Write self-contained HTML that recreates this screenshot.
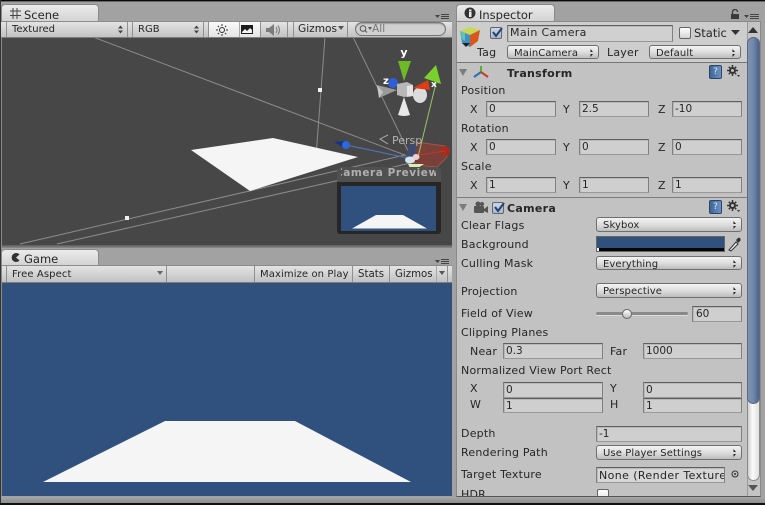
<!DOCTYPE html>
<html><head><meta charset="utf-8">
<style>
html,body{margin:0;padding:0;width:765px;height:505px;overflow:hidden;background:#a2a2a2}
*{box-sizing:border-box}
body{position:relative;font-family:"DejaVu Sans","Liberation Sans",sans-serif;color:#1a1a1a}
div,span.a{position:absolute}
.l{position:absolute;font-size:11px;line-height:14px;margin-top:1px;letter-spacing:.22px;white-space:nowrap;color:#262626}
.tb{position:absolute;font-size:10.6px;line-height:14px;margin-top:1px;white-space:nowrap;color:#262626}
.f{position:absolute;background:#cfcfcf;border:1px solid #808080;border-top-color:#606060;border-bottom-color:#989898;box-shadow:inset 1px 1px 0 #b8b8b8;font-size:10.5px;line-height:14px;padding-left:2px;white-space:nowrap;overflow:hidden;color:#262626}
.p{position:absolute;background:linear-gradient(#f3f3f3,#dedede 50%,#bdbdbd);border:1px solid #6f6f6f;border-radius:3px;font-size:10px;letter-spacing:.1px;line-height:13px;padding:1px 0 0 6px;white-space:nowrap;color:#262626}
.p:after{content:"";position:absolute;right:5px;top:3px;width:5px;height:8px;background:linear-gradient(#222 0 3px,transparent 3px 5px,#222 5px);clip-path:polygon(50% 0,100% 38%,0 38%,0 62%,100% 62%,50% 100%)}
.tab{position:absolute;background:linear-gradient(#ebebeb,#d2d2d2);border:1px solid #8a8a8a;border-bottom:0;border-radius:4px 4px 0 0}
.sep{position:absolute;width:1px;background:#8f8f8f}
.bar{position:absolute;background:linear-gradient(#e3e3e3,#c2c2c2);border-top:1px solid #8c8c8c;border-bottom:1px solid #7e7e7e}
.cb{position:absolute;width:12px;height:12px;background:linear-gradient(#fff,#d4d4d4);border:1px solid #666;border-radius:2px}
.h{position:absolute;width:13px;height:14px;background:linear-gradient(90deg,#3f6598,#6d93c6);border:1px solid #2c4468;border-radius:2px;color:#dbe6f5;font-size:9px;line-height:12px;text-align:center}
</style></head><body>
<div style="left:0;top:0;width:765px;height:1px;background:#0a0a0a"></div>
<div style="left:0;top:1px;width:765px;height:1px;background:#666"></div>
<div style="left:0;top:0;width:1px;height:505px;background:#333"></div>
<div style="left:0;top:503px;width:765px;height:2px;background:#111"></div>
<div style="left:1px;top:497px;width:764px;height:6px;background:linear-gradient(#a6a6a6,#8e8e8e)"></div>

<!-- Scene -->
<div class="tab" style="left:1px;top:4px;width:98px;height:18px"></div>
<svg style="position:absolute;left:9px;top:7px" width="14" height="13"><path d="M4 1V12M8 1V12M1 4H12M1 8.500H12" stroke="#444" fill="none"/></svg>
<div class="l" style="left:24px;top:7px;font-size:11.5px;letter-spacing:0">Scene</div>
<svg style="position:absolute;left:434px;top:13px" width="18" height="8"><path d="M1 2H6L3.500 5Z" fill="#444"/><path d="M7 1.500H15M7 3.500H15M7 5.500H15" stroke="#444"/></svg>
<div class="bar" style="left:1px;top:21px;width:451px;height:17px"></div>
<div class="sep" style="left:6px;top:22px;height:15px"></div>
<div class="tb" style="left:12px;top:22px;font-size:10px">Textured</div>
<svg style="position:absolute;left:118px;top:25px" width="6" height="9"><path d="M0 3.500L2.500 0.500L5 3.500ZM0 5.500L2.500 8.500L5 5.500Z" fill="#444"/></svg>
<div class="sep" style="left:127px;top:22px;height:15px"></div>
<div class="sep" style="left:132px;top:22px;height:15px"></div>
<div class="tb" style="left:138px;top:22px;font-size:10px">RGB</div>
<svg style="position:absolute;left:194px;top:25px" width="6" height="9"><path d="M0 3.500L2.500 0.500L5 3.500ZM0 5.500L2.500 8.500L5 5.500Z" fill="#444"/></svg>
<div class="sep" style="left:203px;top:22px;height:15px"></div>
<div class="sep" style="left:208px;top:22px;height:15px"></div>
<div style="left:209px;top:22px;width:51px;height:15px;background:linear-gradient(#fafafa,#e4e4e4)"></div>
<svg style="position:absolute;left:215px;top:23px" width="14" height="14"><circle cx="7" cy="7" r="2.500" fill="none" stroke="#333"/><path d="M7 1V3M7 11V13M1 7H3M11 7H13M2.800 2.800L4 4M10 10L11.200 11.200M2.800 11.200L4 10M10 4L11.200 2.800" stroke="#333"/></svg>
<div class="sep" style="left:239px;top:22px;height:15px;background:#a8a8a8"></div>
<div style="left:241px;top:25px;width:12px;height:9px;background:#1c1c1c"></div>
<svg style="position:absolute;left:241px;top:25px" width="12" height="9"><path d="M1 7L4 4L6 6L9 3L11 5V8H1Z" fill="#f2f2f2"/></svg>
<div class="sep" style="left:260px;top:22px;height:15px"></div>
<svg style="position:absolute;left:265px;top:23px" width="16" height="14"><path d="M1 5H4L9 1V13L4 9H1Z" fill="#7c7c7c"/><path d="M11 4Q13 7 11 10M13 2.500Q16 7 13 11.500" stroke="#777" fill="none"/></svg>
<div class="sep" style="left:287px;top:22px;height:15px"></div>
<div class="sep" style="left:293px;top:22px;height:15px"></div>
<div class="tb" style="left:298px;top:21px">Gizmos</div>
<svg style="position:absolute;left:338px;top:26px" width="7" height="5"><path d="M0 0H6L3 4Z" fill="#555"/></svg>
<div class="sep" style="left:347px;top:22px;height:15px"></div>
<div style="left:355px;top:22px;width:91px;height:14px;border:1px solid #767676;border-radius:7px;background:#d0d0d0;box-shadow:inset 0 1px 1px #999"></div>
<svg style="position:absolute;left:359px;top:24px" width="14" height="10"><circle cx="4" cy="4.500" r="2.800" fill="none" stroke="#555"/><path d="M6 6.500L8 8.500" stroke="#555"/><path d="M9 3H13L11 6Z" fill="#555"/></svg>
<div class="tb" style="left:372px;top:21px;color:#777">All</div>

<div style="left:1px;top:38px;width:451px;height:207px;background:#474747;overflow:hidden"></div>
<svg style="position:absolute;left:1px;top:38px" width="451" height="207" viewBox="1 38 451 207">
<g stroke="#8c8c8c" fill="none" stroke-width="1">
<path d="M93 37L410 157"/>
<path d="M325 37L315 170"/>
<path d="M353 37L410 155"/>
<path d="M20 244L405 155"/>
<path d="M57 244L340 180L410 163"/>
<path d="M340 180H420"/>
</g>
<rect x="318" y="88" width="4" height="4" fill="#f0f0f0"/>
<rect x="125" y="216" width="4" height="4" fill="#f0f0f0"/>
<path d="M191 150L273 138L358 157L250 191Z" fill="#f5f5f5"/>
<!-- camera gizmo -->
<path d="M416 142L445 146L447 157L437 167L414 165Z" fill="#7a3f38"/>
<path d="M416 142L445 146L447 157L437 167L414 165Z" fill="none" stroke="#a3544a"/>
<circle cx="445" cy="151" r="5" fill="#a92a1e"/>
<path d="M408 157L445 151" stroke="#bb3a30"/>
<path d="M410 143L418 143L414 158L406 156Z" fill="#3a4a72" opacity=".9"/>
<path d="M346 145L408 158" stroke="#4c70b4" stroke-width="1.200"/>
<path d="M334 142L346 141L346 149Z" fill="#13328c"/>
<circle cx="346" cy="145" r="4" fill="#2f68dd"/>
<path d="M436 83L418 157" stroke="#97c565"/>
<ellipse cx="410" cy="160" rx="5" ry="3.500" fill="#d6e4f0"/>
<ellipse cx="416" cy="157" rx="3.500" ry="3" fill="#e9d0d0"/>
<path d="M408 164L424 164L418 168H410Z" fill="#dcecb0"/>
<!-- axis gizmo -->
<ellipse cx="420" cy="95" rx="7" ry="8" fill="#dcdcdc"/>
<path d="M398 61H411L404 81Z" fill="#6dbb24"/>
<path d="M436 65L424 78L441 84Z" fill="#7ad12c"/>
<path d="M413 88L428 80L430 90Z" fill="#e13c14"/>
<circle cx="393" cy="83" r="5" fill="#2c5fd8"/>
<path d="M377 85L379 98L397 90Z" fill="#9a9a9a"/>
<path d="M377 85L379 98L383 92Z" fill="#c6c6c6"/>
<path d="M397 84L407 82L413 85V96L404 97L397 95Z" fill="#b8b8b8"/>
<path d="M407 86L413 85V96L407 97Z" fill="#e4e4e4"/>
<path d="M404 97L398 115Q404 117 410 115Z" fill="#e8e8e8"/>
<path d="M388 135L380 139L388 144" stroke="#aaa" fill="none"/>
<text x="404" y="56" font-family="DejaVu Sans" font-weight="bold" font-size="11" fill="#fff" text-anchor="middle">y</text>
<text x="383" y="84" font-family="DejaVu Sans" font-weight="bold" font-size="10" fill="#fff">z</text>
<text x="431" y="87" font-family="DejaVu Sans" font-weight="bold" font-size="9" fill="#fff">x</text>
<text x="392" y="144" font-family="DejaVu Sans" font-size="11" fill="#b4b4b4">Persp</text>
</svg>
<!-- preview -->
<div style="left:337px;top:167px;width:104px;height:67px;background:#262626;border-radius:3px;overflow:hidden">
  <div style="left:0;top:0;width:104px;height:15px;background:#505050"></div>
  <div style="left:4px;top:0;width:95px;overflow:hidden;height:15px;"><div style="left:-6px;top:0;font-size:10.500px;line-height:13px;font-weight:bold;color:#b0b0b0;white-space:nowrap;letter-spacing:.55px">Camera Preview</div></div>
  <div style="left:4px;top:19px;width:95px;height:45px;background:#30507d"></div>
</div>
<svg style="position:absolute;left:341px;top:186px" width="95" height="45"><path d="M11 42.500L35 29H62L86 42.500Z" fill="#f5f5f5"/></svg>
<div style="left:1px;top:245px;width:451px;height:3px;background:linear-gradient(#5a5a5a,#8c8c8c)"></div>

<!-- Game -->
<div class="tab" style="left:1px;top:249px;width:98px;height:17px"></div>
<svg style="position:absolute;left:10px;top:252px" width="11" height="11"><path d="M9.500 2.500A4.500 4.500 0 1 0 9.500 8.500L6 5.500Z" fill="#333"/></svg>
<div class="l" style="left:24px;top:251px;font-size:11.5px;letter-spacing:0">Game</div>
<svg style="position:absolute;left:434px;top:258px" width="18" height="8"><path d="M1 2H6L3.500 5Z" fill="#444"/><path d="M7 1.500H15M7 3.500H15M7 5.500H15" stroke="#444"/></svg>
<div class="bar" style="left:1px;top:265px;width:451px;height:18px"></div>
<div class="sep" style="left:6px;top:266px;height:16px"></div>
<div class="tb" style="left:12px;top:267px;font-size:10px;letter-spacing:.1px">Free Aspect</div>
<svg style="position:absolute;left:157px;top:271px" width="7" height="5"><path d="M0 0H6L3 4Z" fill="#666"/></svg>
<div class="sep" style="left:166px;top:266px;height:16px"></div>
<div class="sep" style="left:254px;top:266px;height:16px"></div>
<div class="tb" style="left:260px;top:267px;font-size:10px;letter-spacing:.1px">Maximize on Play</div>
<div class="sep" style="left:352px;top:266px;height:16px"></div>
<div class="tb" style="left:358px;top:267px;font-size:10.2px">Stats</div>
<div class="sep" style="left:389px;top:266px;height:16px"></div>
<div class="tb" style="left:395px;top:267px;font-size:10.2px">Gizmos</div>
<div class="sep" style="left:436px;top:266px;height:16px;background:#a8a8a8"></div>
<svg style="position:absolute;left:439px;top:271px" width="7" height="5"><path d="M0 0H6L3 4Z" fill="#555"/></svg>
<div class="sep" style="left:447px;top:266px;height:16px"></div>
<div style="left:1px;top:283px;width:451px;height:213px;background:#30507d"></div>
<svg style="position:absolute;left:1px;top:283px" width="451" height="213" viewBox="1 283 451 213"><path d="M43 482L165 421H295L411 482Z" fill="#f5f5f5"/></svg>
<div style="left:1px;top:37px;width:1px;height:459px;background:#8a8a8a"></div>

<!-- Inspector -->
<div class="tab" style="left:456px;top:4px;width:99px;height:18px"></div>
<svg style="position:absolute;left:464px;top:7px" width="13" height="13"><circle cx="6" cy="6" r="5.500" fill="#333"/><rect x="5" y="5" width="2.500" height="5" fill="#eee"/><rect x="5" y="2.500" width="2.500" height="2" fill="#eee"/></svg>
<div class="l" style="left:479px;top:7px;font-size:11.5px;letter-spacing:0">Inspector</div>
<svg style="position:absolute;left:730px;top:9px" width="11" height="10"><path d="M2.500 5V3A2.500 2.500 0 0 1 7.500 3" stroke="#3a3a3a" stroke-width="1.300" fill="none"/><rect x="1" y="5" width="8" height="5" fill="#3a3a3a"/></svg>
<svg style="position:absolute;left:744px;top:13px" width="18" height="8"><path d="M0 2H5L2.500 5Z" fill="#444"/><path d="M6 1.500H15M6 3.500H15M6 5.500H15" stroke="#444"/></svg>
<div style="left:456px;top:21px;width:305px;height:476px;background:#c2c2c2;border:1px solid #8a8a8a;border-bottom-color:#555"></div>
<div style="left:457px;top:22px;width:290px;height:40px;background:#cdcdcd"></div>
<div style="left:457px;top:62px;width:290px;height:1px;background:#747474"></div>

<!-- top header -->
<svg style="position:absolute;left:458px;top:26px" width="24" height="22"><path d="M2 5L12 1L22 4L12 9Z" fill="#c8d850"/><path d="M2 5L12 9V21L4 17Z" fill="#3f90c4"/><path d="M12 9L22 4L20 15L12 21Z" fill="#d9571c"/><path d="M2 5L7 7V15L4 13Z" fill="#62c3b0"/><path d="M4 17H12L8 21Z" fill="#222"/></svg>
<div class="cb" style="left:490px;top:27px;background:linear-gradient(#c9d6e8,#a6b8d2)"></div>
<svg style="position:absolute;left:491px;top:26px" width="13" height="13"><path d="M2 6L5 10L11 2" stroke="#27406e" stroke-width="2" fill="none"/></svg>
<div class="f" style="left:507px;top:25px;width:166px;height:17px;font-size:11px;background:#d0d0d0;letter-spacing:.35px">Main Camera</div>
<div class="cb" style="left:679px;top:27px"></div>
<div class="l" style="left:694px;top:25px;font-size:11.5px;letter-spacing:0">Static</div>
<svg style="position:absolute;left:731px;top:30px" width="10" height="6"><path d="M0 0H9L4.500 5Z" fill="#333"/></svg>
<div class="l" style="left:477px;top:45px">Tag</div>
<div class="p" style="left:507px;top:45px;width:92px;height:14px">MainCamera</div>
<div class="l" style="left:607px;top:45px">Layer</div>
<div class="p" style="left:649px;top:45px;width:92px;height:14px">Default</div>

<!-- Transform -->
<svg style="position:absolute;left:459px;top:68px" width="9" height="9"><path d="M0 1H8L4 8Z" fill="#7c7c7c"/></svg>
<svg style="position:absolute;left:473px;top:65px" width="16" height="14"><path d="M8 7V1" stroke="#5db02c" stroke-width="2"/><path d="M8 7L1 12" stroke="#2d6eb8" stroke-width="2"/><path d="M8 7L15 12" stroke="#c83a2a" stroke-width="2"/></svg>
<div class="l" style="left:507px;top:66px;font-weight:bold;font-size:11px;letter-spacing:.3px">Transform</div>
<div class="h" style="left:709px;top:65px">?</div>
<svg style="position:absolute;left:727px;top:65px" width="14" height="13"><circle cx="5.500" cy="5.500" r="2.500" fill="none" stroke="#333" stroke-width="2"/><path d="M5.500 0V2M5.500 9V11M0 5.500H2M9 5.500H11M1.800 1.800L3 3M8 8L9.200 9.200M1.800 9.200L3 8M8 3L9.200 1.800" stroke="#333" stroke-width="1.500"/><path d="M10 10H13L11.500 12Z" fill="#333"/></svg>

<div class="l" style="left:461px;top:83px">Position</div>
<div class="l" style="left:470px;top:102px">X</div><div class="f" style="left:486px;top:101px;width:70px;height:16px">0</div>
<div class="l" style="left:563px;top:102px">Y</div><div class="f" style="left:579px;top:101px;width:70px;height:16px">2.5</div>
<div class="l" style="left:658px;top:102px">Z</div><div class="f" style="left:672px;top:101px;width:70px;height:16px">-10</div>

<div class="l" style="left:461px;top:121px">Rotation</div>
<div class="l" style="left:470px;top:140px">X</div><div class="f" style="left:486px;top:139px;width:70px;height:16px">0</div>
<div class="l" style="left:563px;top:140px">Y</div><div class="f" style="left:579px;top:139px;width:70px;height:16px">0</div>
<div class="l" style="left:658px;top:140px">Z</div><div class="f" style="left:672px;top:139px;width:70px;height:16px">0</div>

<div class="l" style="left:461px;top:159px">Scale</div>
<div class="l" style="left:470px;top:178px">X</div><div class="f" style="left:486px;top:177px;width:70px;height:16px">1</div>
<div class="l" style="left:563px;top:178px">Y</div><div class="f" style="left:579px;top:177px;width:70px;height:16px">1</div>
<div class="l" style="left:658px;top:178px">Z</div><div class="f" style="left:672px;top:177px;width:70px;height:16px">1</div>

<div style="left:457px;top:197px;width:290px;height:1px;background:#7c7c7c"></div>

<!-- Camera -->
<svg style="position:absolute;left:459px;top:203px" width="9" height="9"><path d="M0 1H8L4 8Z" fill="#7c7c7c"/></svg>
<svg style="position:absolute;left:473px;top:201px" width="16" height="13"><circle cx="5" cy="3" r="2.500" fill="#555"/><circle cx="9" cy="3" r="2" fill="#555"/><rect x="1" y="5" width="10" height="7" rx="1" fill="#555"/><path d="M11 8L15 5V12L11 10Z" fill="#555"/></svg>
<div class="cb" style="left:492px;top:202px;background:linear-gradient(#c9d6e8,#a6b8d2)"></div>
<svg style="position:absolute;left:493px;top:201px" width="13" height="13"><path d="M2 6L5 10L11 2" stroke="#27406e" stroke-width="2" fill="none"/></svg>
<div class="l" style="left:507px;top:201px;font-weight:bold;letter-spacing:.3px">Camera</div>
<div class="h" style="left:709px;top:200px">?</div>
<svg style="position:absolute;left:727px;top:200px" width="14" height="13"><circle cx="5.500" cy="5.500" r="2.500" fill="none" stroke="#333" stroke-width="2"/><path d="M5.500 0V2M5.500 9V11M0 5.500H2M9 5.500H11M1.800 1.800L3 3M8 8L9.200 9.200M1.800 9.200L3 8M8 3L9.200 1.800" stroke="#333" stroke-width="1.500"/><path d="M10 10H13L11.500 12Z" fill="#333"/></svg>

<div class="l" style="left:461px;top:218px">Clear Flags</div>
<div class="p" style="left:596px;top:217px;width:146px;height:15px">Skybox</div>
<div class="l" style="left:461px;top:237px">Background</div>
<div style="left:596px;top:236px;width:129px;height:16px;background:#30507d;border:1px solid #666"></div>
<div style="left:597px;top:248px;width:127px;height:3px;background:#050505"></div>
<div style="left:597px;top:248px;width:2px;height:3px;background:#eee"></div>
<svg style="position:absolute;left:727px;top:236px" width="15" height="16"><path d="M2 14L9 6L11 8L4 15Z" fill="#eee" stroke="#333"/><path d="M9 4L11 2Q13 1 13.500 3T12 6L11 7Z" fill="#333"/></svg>
<div class="l" style="left:461px;top:256px">Culling Mask</div>
<div class="p" style="left:596px;top:256px;width:146px;height:14px">Everything</div>
<div class="l" style="left:461px;top:284px">Projection</div>
<div class="p" style="left:596px;top:283px;width:146px;height:15px">Perspective</div>
<div class="l" style="left:461px;top:306px">Field of View</div>
<div style="left:596px;top:312px;width:92px;height:3px;background:#8a8a8a;border-radius:2px;box-shadow:0 1px 0 #ddd"></div>
<div style="left:622px;top:309px;width:10px;height:10px;border-radius:5px;background:linear-gradient(#fff,#bbb);border:1px solid #666"></div>
<div class="f" style="left:692px;top:306px;width:50px;height:16px;padding-left:3px">60</div>
<div class="l" style="left:461px;top:325px">Clipping Planes</div>
<div class="l" style="left:470px;top:344px">Near</div><div class="f" style="left:503px;top:343px;width:100px;height:16px">0.3</div>
<div class="l" style="left:610px;top:344px">Far</div><div class="f" style="left:643px;top:343px;width:99px;height:16px">1000</div>
<div class="l" style="left:461px;top:363px">Normalized View Port Rect</div>
<div class="l" style="left:470px;top:381px">X</div><div class="f" style="left:503px;top:382px;width:100px;height:16px">0</div>
<div class="l" style="left:610px;top:381px">Y</div><div class="f" style="left:643px;top:382px;width:99px;height:16px">0</div>
<div class="l" style="left:470px;top:397px">W</div><div class="f" style="left:503px;top:398px;width:100px;height:15px">1</div>
<div class="l" style="left:610px;top:397px">H</div><div class="f" style="left:643px;top:398px;width:99px;height:15px">1</div>
<div class="l" style="left:461px;top:426px">Depth</div>
<div class="f" style="left:596px;top:426px;width:146px;height:16px">-1</div>
<div class="l" style="left:461px;top:445px">Rendering Path</div>
<div class="p" style="left:596px;top:445px;width:146px;height:15px">Use Player Settings</div>
<div class="l" style="left:461px;top:467px">Target Texture</div>
<div class="f" style="left:596px;top:467px;width:129px;height:16px;background:#d6d6d6;font-size:11px;letter-spacing:.4px;line-height:15px">None (Render Texture)</div>
<svg style="position:absolute;left:731px;top:470px" width="8" height="8"><circle cx="4" cy="4" r="3" fill="none" stroke="#333"/><circle cx="4" cy="4" r="1" fill="#333"/></svg>
<div style="left:457px;top:485px;width:290px;height:11px;overflow:hidden"><div class="l" style="left:4px;top:2px">HDR</div></div>
<div style="left:597px;top:489px;width:12px;height:7px;background:linear-gradient(#fff,#eee);border:1px solid #666;border-bottom:0;border-radius:2px 2px 0 0"></div>

<!-- scrollbar -->
<div style="left:747px;top:22px;width:13px;height:474px;background:#c4c4c4;border-left:1px solid #9a9a9a"></div>
<svg style="position:absolute;left:748px;top:26px" width="12" height="8"><path d="M0 7H10L5 1Z" fill="#333"/></svg>
<svg style="position:absolute;left:748px;top:484px" width="12" height="8"><path d="M0 1H10L5 7Z" fill="#555"/></svg>
<div style="left:747px;top:37px;width:13px;height:444px;background:linear-gradient(90deg,#cfcfcf,#fafafa 40%,#e0e0e0);border:1px solid #8a8a8a;border-radius:7px"></div>
<div style="left:747px;top:37px;width:13px;height:367px;background:linear-gradient(90deg,#7f93b0,#6f87ab 50%,#4d6284);border:1px solid #5a6a80;border-radius:7px"></div>
</body></html>
